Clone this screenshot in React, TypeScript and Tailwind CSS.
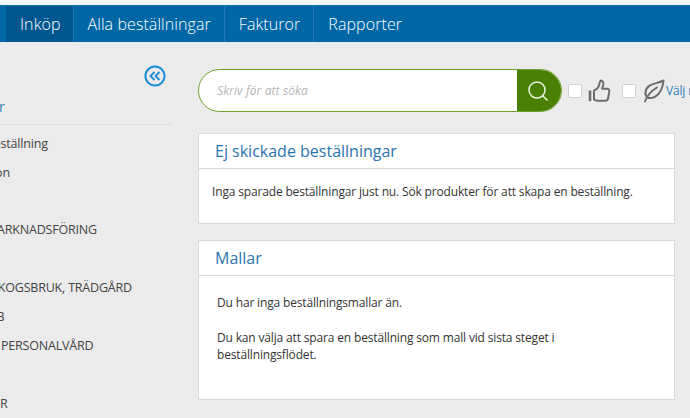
import React from 'react';
import { Search } from 'lucide-react';

const navItems = ['Inköp', 'Alla beställningar', 'Fakturor', 'Rapporter'];

const sideItems = [
  { label: 'Ny beställning', cls: '-ml-[32px] h-[29px]' },
  { label: 'Kollektion', cls: '-ml-[46px] h-[28px]' },
  { label: '', cls: 'h-[29px]' },
  { label: 'MARKNADSFÖRING', cls: '-ml-[14px] h-[28px]' },
  { label: '', cls: 'h-[30px]' },
  { label: 'JORD, SKOGSBRUK, TRÄDGÅRD', cls: '-ml-[44px] h-[29px]' },
  { label: 'KLUBB', cls: '-ml-[34px] h-[29px]' },
  { label: 'HYGIEN, PERSONALVÅRD', cls: '-ml-[49px] h-[29px]' },
  { label: '', cls: 'h-[29px]' },
  { label: 'VERKTYGER', cls: '-ml-[58px] h-[29px]' },
];

const Panel: React.FC<{ title: string; className: string; children: React.ReactNode }> = ({ title, className, children }) => (
  <section className={`bg-white border border-[#d8d8d8] ${className}`}>
    <h2 className="h-[35px] border-b border-[#d8d8d8] pl-4 pt-[5px] text-[16px] leading-[24px] text-[#2b74ad]">{title}</h2>
    {children}
  </section>
);

const ThumbIcon = () => (
  <svg width="23" height="24" viewBox="0 0 23 24" fill="none" stroke="#6d6d6d" strokeWidth="2" className="ml-[6px] shrink-0">
    <path d="M2 11.500V22" strokeWidth="2.600" />
    <path d="M6 11.500c2.500-1 4.600-3.200 5.300-6 .3-1.500.5-3 1.500-4 2 .3 2.800 2 2.500 4-.2 1.500-.8 3-1.300 4.200h5c1.700 0 2.600 1.300 2.300 2.900l-1.200 6.700c-.3 1.500-1.300 2.400-2.800 2.400H9.500c-1.400 0-2.500-.5-3.500-1.200z" strokeLinejoin="round" />
  </svg>
);

const LeafIcon = () => (
  <svg width="22" height="24" viewBox="0 0 22 24" fill="none" stroke="#6d6d6d" strokeWidth="2" strokeLinecap="round" className="ml-[7px] shrink-0">
    <path d="M20.500 1.500C14 5 4 4 2.500 13c-.4 2.500.5 4.500 2.500 6 9 1 14.500-7 15.500-17.500z" strokeLinejoin="round" />
    <path d="M2 22.500C4 17 8 12 14 8.500" />
  </svg>
);

export default function App() {
  return (
    <div className="h-[418px] w-[690px] overflow-hidden bg-[#ebebeb] font-['Open_Sans',sans-serif]">
      <div className="h-[5px] bg-[#f7f7f7]" />
      <nav className="flex h-[37px] border-t border-[#0b6f9e] bg-[#0067a6] pl-[6px] text-[16px] font-light tracking-[0.08px] text-white">
        {navItems.map((item, i) => (
          <a
            key={item}
            className={`flex items-center pl-[14px] leading-[36px] ${i === 0 ? 'bg-[#00578f] pr-[12px]' : 'pr-[13px]'} ${i < 3 ? 'border-r border-[#1f78b0]' : ''}`}
          >
            {item}
          </a>
        ))}
      </nav>

      <div className="flex">
        <aside className="w-[172px] shrink-0 overflow-hidden">
          <div className="flex h-[33px] items-end justify-end pr-[6px]">
            <svg width="22" height="22" viewBox="0 0 22 22" fill="none" stroke="#1c8ed6" strokeWidth="2" className="mb-[-12px]">
              <circle cx="11" cy="11" r="9.600" />
              <path d="M10.500 7 6.500 11l4 4M15.500 7 11.500 11l4 4" strokeWidth="1.800" />
            </svg>
          </div>
          <div className="mt-[20px] h-[30px] border-b border-[#dcdcdc] pb-[6px] text-[14px] leading-[24px] text-[#2c7fb8]">
            <span className="-ml-[1px] block">r</span>
          </div>
          <ul className="mt-[5px] text-[12.5px] leading-[28px] tracking-[-0.2px] text-[#444]">
            {sideItems.map((item, i) => (
              <li key={i} className={`whitespace-nowrap ${item.cls}`}>{item.label}</li>
            ))}
          </ul>
        </aside>

        <main className="ml-[26px] min-w-0 flex-1 overflow-hidden pt-[27px]">
          <div className="flex h-[43px] items-center">
            <div className="flex h-[43px] w-[364px] shrink-0 overflow-hidden rounded-full border border-[#6f9f2c] bg-white">
              <div className="flex flex-1 items-center pl-[18px] text-[12px] italic tracking-[0.1px] text-[#b5b5b5]">Skriv för att söka</div>
              <button className="flex w-[44px] items-center justify-center bg-[#4a8003] pr-[2px]">
                <Search size={24} strokeWidth={1.5} className="text-[#eef5e2]" />
              </button>
            </div>
            <span className="ml-[6px] h-[14px] w-[14px] shrink-0 rounded-[2px] border border-[#d0d0d0] bg-white" />
            <ThumbIcon />
            <span className="ml-[11px] h-[14px] w-[14px] shrink-0 rounded-[2px] border border-[#d0d0d0] bg-white" />
            <LeafIcon />
            <span className="ml-[1px] whitespace-nowrap text-[12px] tracking-[-0.16px] text-[#2c7fb8]">Välj miljö</span>
          </div>

          <Panel title="Ej skickade beställningar" className="mt-[21px] h-[91px] w-[477px]">
            <p className="pl-[13px] pt-[14px] text-[12px] leading-[18px] tracking-[-0.16px] text-[#333]">
              Inga sparade beställningar just nu. Sök produkter för att skapa en beställning.
            </p>
          </Panel>

          <Panel title="Mallar" className="mt-[16px] h-[160px] w-[477px]">
            <div className="px-[18px] pt-[18px] text-[12px] leading-[17px] tracking-[-0.16px] text-[#333]">
              <p>Du har inga beställningsmallar än.</p>
              <p className="mt-[18px]">
                Du kan välja att spara en beställning som mall vid sista steget i
                <br />
                beställningsflödet.
              </p>
            </div>
          </Panel>
        </main>
      </div>
    </div>
  );
}
